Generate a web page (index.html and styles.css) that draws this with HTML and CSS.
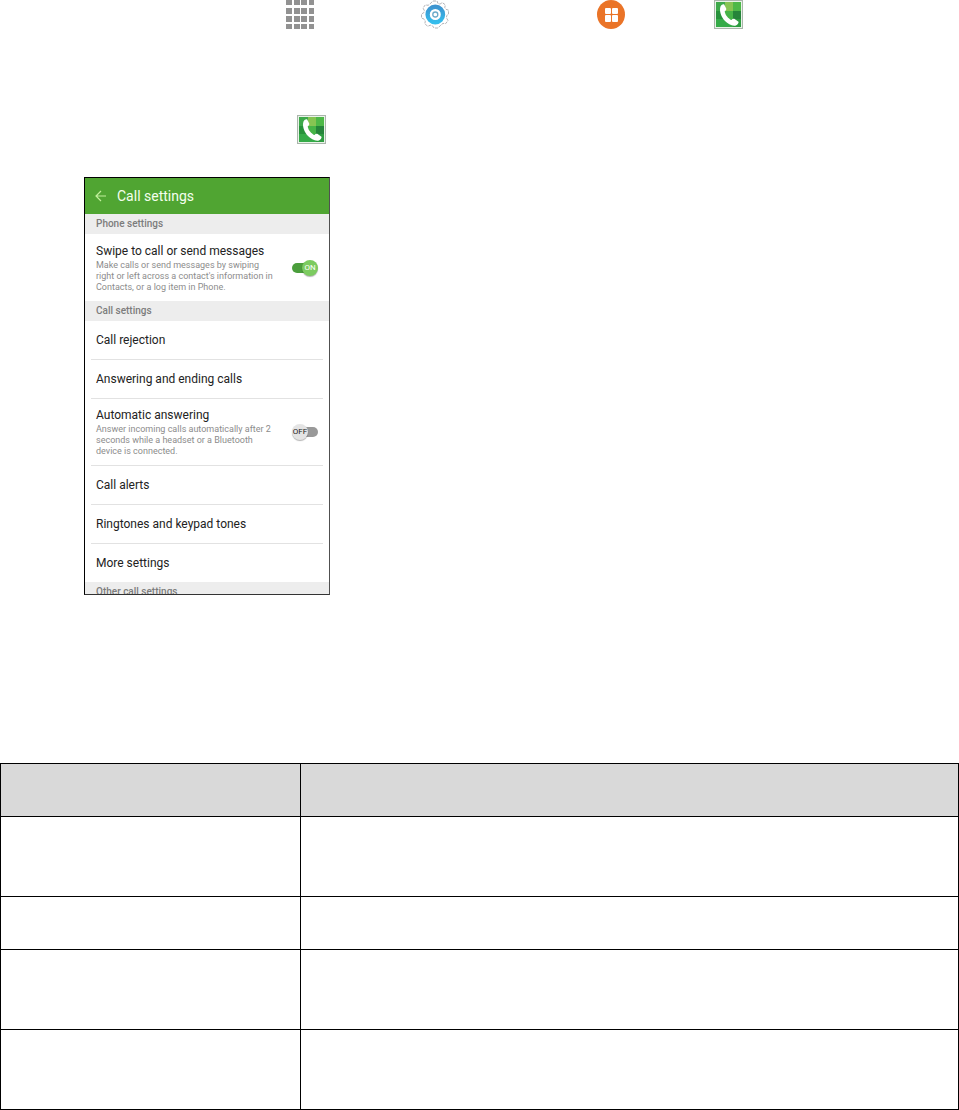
FILE: index.html
```
<!DOCTYPE html>
<html lang="en">
<head>
    <meta charset="UTF-8">
    <meta name="viewport" content="width=device-width, initial-scale=1.0">
    <title>Call settings</title>
    <link rel="stylesheet" href="styles.css">
</head>
<body>
    <!-- phone app icon, used in both steps -->
    <svg class="defs" width="0" height="0" aria-hidden="true">
        <symbol id="phone-icon" viewBox="0 0 29 29">
            <rect width="29" height="29" fill="#aab5ab"/>
            <rect x="1" y="1" width="27" height="27" fill="#e9f3e8"/>
            <rect x="2" y="2" width="25" height="25" fill="#35ab48"/>
            <path d="M2 2h9v9H2z" fill="#3da94a"/>
            <path d="M11 2h8v9h-8z" fill="#86c452"/>
            <path d="M19 2h8v9h-8z" fill="#4db847"/>
            <path d="M2 11h9v8H2z" fill="#27923b"/>
            <path d="M11 11h8v8h-8z" fill="#46b447"/>
            <path d="M19 11h8v8h-8z" fill="#25843a"/>
            <path d="M19 19h8v8h-8z" fill="#2d9c40"/>
            <path d="M6.500 6.500C7.500 4.600 9.300 4 10.200 4.500L12.200 8.500C12.600 9.600 11.900 10.600 10.700 11.400C11.300 15 14.300 18.400 17.400 20C18.500 18.800 19.600 18.400 20.600 19L24.500 21.700C25 22.600 23.600 24.600 21.900 25.400C18.500 26.400 14 24.200 11 21C7.400 17.200 4.900 11 6.500 6.500Z" fill="#fff"/>
        </symbol>
    </svg>

    <main>
        <div class="step path">
            <svg class="icon apps" viewBox="0 0 28 29" role="img" aria-label="Apps">
                <g fill="#929292">
                    <path d="M0 0h6v5H0zM8 0h6v5H8zM15 0h6v5h-6zM23 0h5v5h-5z"/>
                    <path d="M0 8h6v6H0zM8 8h6v6H8zM15 8h6v6h-6zM23 8h5v6h-5z"/>
                    <path d="M0 16h6v6H0zM8 16h6v6H8zM15 16h6v6h-6zM23 16h5v6h-5z"/>
                    <path d="M0 24h6v5H0zM8 24h6v5H8zM15 24h6v5h-6zM23 24h5v5h-5z"/>
                </g>
            </svg>
            <svg class="icon settings" viewBox="0 0 28 29" role="img" aria-label="Settings">
                <defs>
                    <linearGradient id="ring" x1="0" y1="0" x2="0" y2="1">
                        <stop offset="0" stop-color="#3d94d0"/>
                        <stop offset="1" stop-color="#35bdec"/>
                    </linearGradient>
                </defs>
                <path d="M12 1h4l1 2.500 2 .6 2.300-1.500 3 2.200-.5 2.800 1.200 1.700 2.600.9v4l-2 1.500v2.300l1.400 2.600-2.300 3-2.700-.2-1.800 1.300L17 28h-4l-1.500-2.200-2.200-.6-2.500 1.100-3-2.500.5-2.700-1.200-2L.5 18v-4l2.300-1.300.5-2.200L2 8l2.300-3.100 2.900.4 1.800-1.400z" fill="#fff" stroke="#b4b4b8" stroke-width="1" stroke-dasharray="3 1"/>
                <circle cx="14.300" cy="14.500" r="7.700" fill="#fff" stroke="url(#ring)" stroke-width="4.400"/>
                <circle cx="14.300" cy="14.500" r="2.500" fill="#fff" stroke="#6aa9c8" stroke-width="1.300"/>
            </svg>
            <svg class="icon applications" viewBox="0 0 28 29" role="img" aria-label="Applications">
                <ellipse cx="14" cy="14.500" rx="14" ry="14.500" fill="#ea7428"/>
                <g fill="#fff">
                    <rect x="8" y="8" width="6" height="6" rx="1"/>
                    <rect x="15" y="8" width="6" height="6" rx="1"/>
                    <rect x="8" y="15" width="6" height="7" rx="1"/>
                    <rect x="15" y="15" width="6" height="7" rx="1"/>
                </g>
            </svg>
            <svg class="icon phone-app" role="img" aria-label="Phone"><use href="#phone-icon"/></svg>
        </div>

        <div class="step result">
            <svg class="icon phone-app" role="img" aria-label="Phone"><use href="#phone-icon"/></svg>
        </div>

        <section class="phone">
            <header class="app-bar">
                <button class="back" type="button" aria-label="Back">
                    <svg viewBox="0 0 12 12" width="12" height="12">
                        <path d="M6 1L1 6l5 5M1 6h10" fill="none" stroke="#c2f09c" stroke-width="1.200"/>
                    </svg>
                </button>
                <h1>Call settings</h1>
            </header>

            <h2>Phone settings</h2>
            <div class="item toggle-item last">
                <label for="swipe">
                    <span class="title">Swipe to call or send messages</span>
                    <span class="desc">Make calls or send messages by swiping<br>right or left across a contact's information in<br>Contacts, or a log item in Phone.</span>
                </label>
                <span class="switch on">
                    <input type="checkbox" id="swipe" checked>
                    <span class="knob">ON</span>
                </span>
            </div>

            <h2>Call settings</h2>
            <button class="item" type="button">Call rejection</button>
            <button class="item" type="button">Answering and ending calls</button>
            <div class="item toggle-item">
                <label for="auto">
                    <span class="title">Automatic answering</span>
                    <span class="desc">Answer incoming calls automatically after 2<br>seconds while a headset or a Bluetooth<br>device is connected.</span>
                </label>
                <span class="switch off">
                    <input type="checkbox" id="auto">
                    <span class="knob">OFF</span>
                </span>
            </div>
            <button class="item" type="button">Call alerts</button>
            <button class="item" type="button">Ringtones and keypad tones</button>
            <button class="item last" type="button">More settings</button>

            <h2>Other call settings</h2>
        </section>

        <table>
            <thead>
                <tr><th class="name"></th><th></th></tr>
            </thead>
            <tbody>
                <tr class="tall"><td></td><td></td></tr>
                <tr><td></td><td></td></tr>
                <tr class="tall"><td></td><td></td></tr>
                <tr class="tall"><td></td><td></td></tr>
            </tbody>
        </table>
    </main>
</body>
</html>
```
FILE: styles.css
```
* {
    box-sizing: border-box;
}

body {
    margin: 0;
    background: #fff;
    font-family: Roboto, "Liberation Sans", sans-serif;
}

.defs {
    display: block;
}

.step {
    display: flex;
    align-items: flex-start;
}

.path {
    padding-left: 286px;
    margin-bottom: 86px;
}

.result {
    padding-left: 297px;
    margin-bottom: 33px;
}

.icon {
    display: block;
    flex: none;
    width: 28px;
    height: 29px;
}

.phone-app {
    width: 29px;
}

.apps {
    margin-right: 107px;
}

.settings {
    margin-right: 148px;
}

.applications {
    margin-right: 89px;
}

/* the list is cut at the bottom of the screen */
.phone {
    width: 246px;
    height: 418px;
    margin: 0 0 168px 84px;
    border: 1px solid #000;
    border-right-color: #505050;
    border-bottom-color: #333;
    overflow: hidden;
    color: #222;
}

.app-bar {
    display: flex;
    align-items: center;
    gap: 10px;
    height: 36px;
    padding-left: 10px;
    background: #50a532;
    color: #f4ffee;
}

.back {
    display: flex;
    padding: 0;
    border: 0;
    background: none;
    cursor: pointer;
}

h1 {
    margin: 0;
    font-size: 14px;
    font-weight: 400;
}

h2 {
    height: 20px;
    margin: 0;
    padding-left: 11px;
    background: #ededed;
    color: #7c7c7c;
    font-size: 10px;
    font-weight: 500;
    line-height: 20px;
}

.item {
    display: flex;
    align-items: center;
    width: 232px;
    min-height: 39px;
    margin: 0 6px;
    padding: 0 5px;
    border: 0;
    border-bottom: 1px solid #e2e2e2;
    background: none;
    color: inherit;
    font: inherit;
    font-size: 12px;
    text-align: left;
    cursor: pointer;
}

.last {
    min-height: 38px;
    border-bottom: 0;
}

.toggle-item {
    justify-content: space-between;
    height: 67px;
}

.title,
.desc {
    display: block;
    white-space: nowrap;
}

.title {
    line-height: 17px;
}

.desc {
    color: #8c8c8c;
    font-size: 9px;
    line-height: 11px;
}

.switch {
    position: relative;
    flex: none;
    width: 26px;
    height: 16px;
}

.switch input {
    appearance: none;
    display: block;
    width: 24px;
    height: 10px;
    margin: 3px 0;
    border-radius: 5px;
    background: #4b9e3c;
    cursor: pointer;
}

.switch.off input {
    margin-left: 2px;
    background: #999;
}

.knob {
    position: absolute;
    top: 0;
    right: 0;
    width: 16px;
    height: 16px;
    border-radius: 50%;
    background: #7ccb60;
    box-shadow: 0 1px 1px rgba(0, 0, 0, 0.3);
    color: #fff;
    font-size: 8px;
    line-height: 16px;
    text-align: center;
    pointer-events: none;
}

.off .knob {
    right: auto;
    left: 0;
    background: #e4e4e4;
    color: #222;
}

table {
    width: 100%;
    border-collapse: collapse;
    table-layout: fixed;
}

th,
td {
    height: 53px;
    padding: 0;
    border: 1px solid #000;
}

th {
    background: #d9d9d9;
}

.name {
    width: 300px;
}

.tall td {
    height: 80px;
}
```
